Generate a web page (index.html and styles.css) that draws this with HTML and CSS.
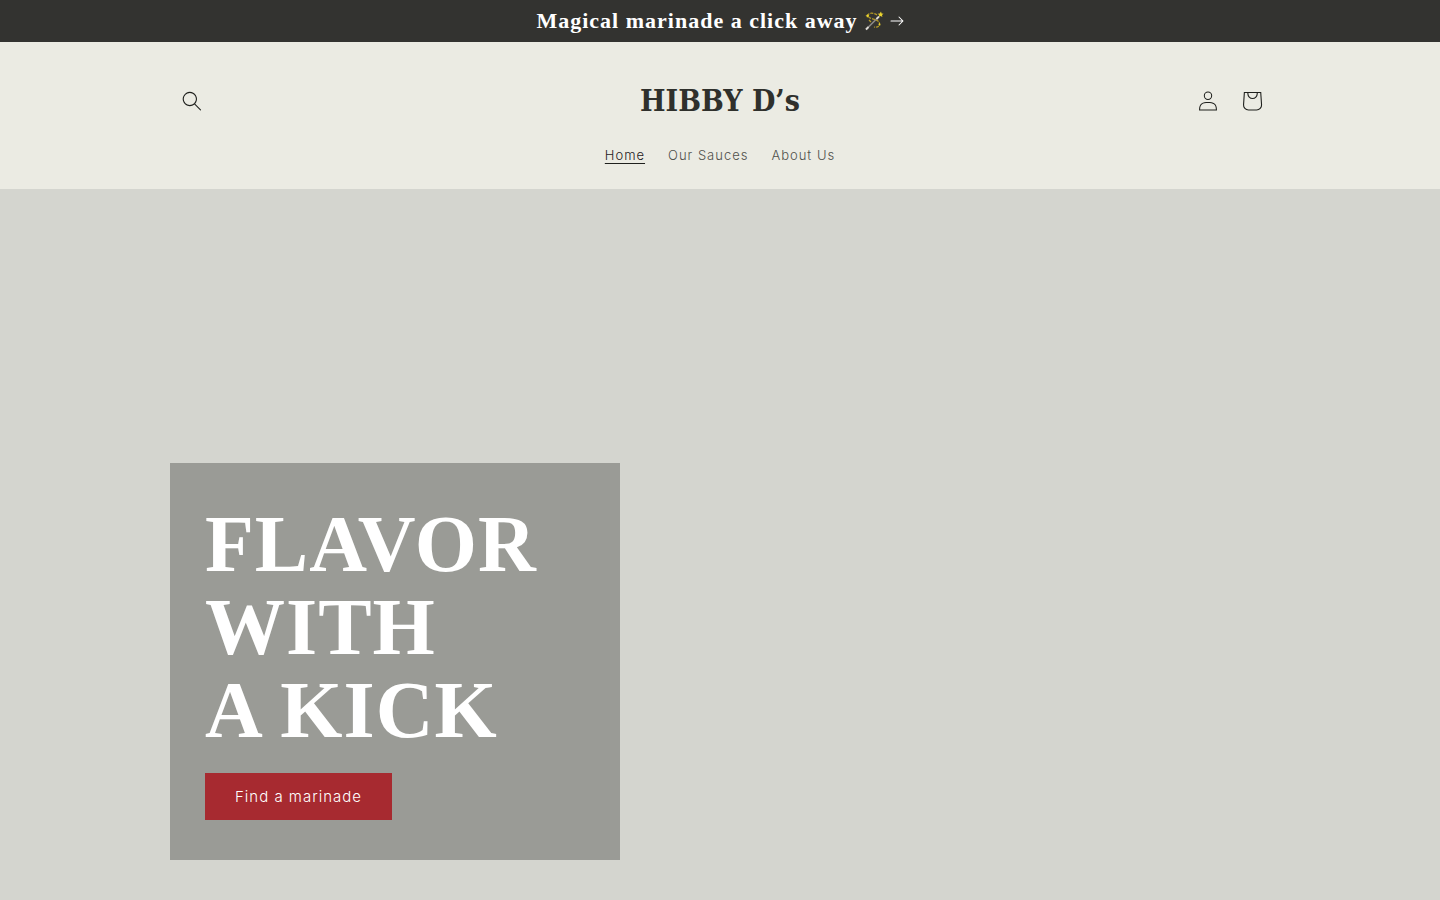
FILE: index.html
```html
<!DOCTYPE html>
<html lang="en">
<head>
<meta charset="utf-8">
<meta name="viewport" content="width=device-width, initial-scale=1">
<title>Hibby D's</title>
<link rel="stylesheet" href="styles.css">
</head>
<body>
<a class="announcement" href="#sauces">
  <span>Magical marinade a click away</span>
  <svg class="wand" viewBox="0 0 20 20" aria-hidden="true">
    <path d="M2 18.5 13.5 7" stroke="#8d8b88" stroke-width="1.6"/>
    <path d="M2 18.5 4.5 16M12.5 8l2.5-2.5" stroke="#dedbd6" stroke-width="1.8"/>
    <path d="M13 4C9 1 3 2 4 5s9 3 11 6-1 6-5 5M5 9l2 2" fill="none" stroke="#b59b26" stroke-width="1.2" stroke-dasharray="3 1"/>
    <path d="m17 .5.6 2 2 .2-1.6 1.3.4 2-1.8-1-1.8 1 .4-2-1.6-1.3 2.1-.2zM3 3l1 1 1.3-.3-.7 1.2.7 1.2L4 5.8l-1 1-.2-1.4L1.500 4.800 2.800 4.300zM15 12l1.500 1-.4 1.700-1.600-.8z" fill="#ead32e"/>
  </svg>
  <svg class="arrow" viewBox="0 0 14 10" aria-hidden="true"><path fill="currentColor" fill-rule="evenodd" d="M8.537.808a.5.5 0 0 1 .817-.162l4 4a.5.5 0 0 1 0 .708l-4 4a.5.5 0 1 1-.708-.708L11.793 5.500H1a.5.5 0 0 1 0-1h10.793L8.646 1.354a.5.5 0 0 1-.109-.546"/></svg>
</a>
<header class="header">
  <div class="header-row">
    <button class="icon-button" type="button" aria-label="Search">
      <svg class="icon" viewBox="0 0 18 19"><path fill="currentColor" fill-rule="evenodd" d="M11.03 11.68A5.784 5.784 0 1 1 2.850 3.500a5.784 5.784 0 0 1 8.180 8.180m.26 1.120a6.780 6.780 0 1 1 .72-.7l5.400 5.400a.5.5 0 1 1-.71.7z"/></svg>
    </button>
    <a class="logo" href="#home">HIBBY D’s</a>
    <div class="actions">
      <a class="icon-button" href="#account" aria-label="Log in">
        <svg class="icon" viewBox="0 0 18 19"><path fill="currentColor" fill-rule="evenodd" d="M6 4.500a3 3 0 1 1 6 0 3 3 0 0 1-6 0m3-4a4 4 0 1 0 0 8 4 4 0 0 0 0-8m5.580 12.150c1.120.82 1.830 2.240 1.910 4.850H1.510c.08-2.600.79-4.030 1.900-4.850C4.660 11.750 6.500 11.500 9 11.500s4.350.26 5.580 1.150M9 10.500c-2.500 0-4.650.24-6.170 1.350C1.270 12.980.5 14.930.5 18v.5h17V18c0-3.070-.77-5.020-2.330-6.150-1.520-1.100-3.670-1.350-6.170-1.350"/></svg>
      </a>
      <a class="icon-button" href="#cart" aria-label="Cart">
        <svg class="cart" viewBox="0 0 40 40"><path fill="currentColor" fill-rule="evenodd" d="M15.750 11.800h-3.160l-.77 11.600a5 5 0 0 0 4.990 5.340h7.380a5 5 0 0 0 4.990-5.330L28.400 11.800zm0 1h-2.220l-.71 10.670a4 4 0 0 0 3.990 4.270h7.380a4 4 0 0 0 4-4.270l-.72-10.670h-2.220v.63a4.750 4.750 0 1 1-9.500 0zm8.500 0h-7.500v.63a3.750 3.750 0 1 0 7.500 0z"/></svg>
      </a>
    </div>
  </div>
  <nav class="nav" aria-label="Main">
    <a class="nav-link current" href="#home" aria-current="page">Home</a>
    <a class="nav-link" href="#sauces">Our Sauces</a>
    <a class="nav-link" href="#about">About Us</a>
  </nav>
</header>
<main class="hero">
  <div class="hero-inner">
    <section class="card">
      <h1 class="title">FLAVOR WITH<br>A KICK</h1>
      <a class="button" href="#sauces">Find a marinade</a>
    </section>
  </div>
</main>
</body>
</html>
```
FILE: styles.css
```css
* {
  box-sizing: border-box;
}

body {
  margin: 0;
  min-height: 100vh;
  display: flex;
  flex-direction: column;
  background: #ebebe3;
  color: #2f302c;
  font-family: Inter, "Liberation Sans", sans-serif;
}

a {
  color: inherit;
  text-decoration: none;
}

.announcement {
  display: flex;
  align-items: center;
  justify-content: center;
  gap: 6px;
  min-height: 42px;
  background: #333330;
  color: #fff;
  font: bold 22px/28px "Liberation Serif", serif;
  letter-spacing: 1px;
}

.wand {
  width: 20px;
  height: 20px;
}

.arrow {
  width: 14px;
  height: 10px;
}

.header {
  padding: 32px 16px 22px;
}

.header-row {
  display: grid;
  grid-template-columns: 1fr auto 1fr;
  align-items: center;
  max-width: 1100px;
  margin: 0 auto;
}

.icon-button {
  display: flex;
  align-items: center;
  justify-content: center;
  width: 44px;
  height: 44px;
  padding: 0;
  border: 0;
  background: none;
  color: #1f201d;
  cursor: pointer;
}

.icon {
  width: 20px;
  height: 20px;
}

.cart {
  width: 44px;
  height: 44px;
}

.actions {
  display: flex;
  justify-content: flex-end;
  margin-right: -4px;
}

.logo {
  font: bold 30px/54px "DejaVu Serif Condensed", "DejaVu Serif", serif;
}

.nav {
  display: flex;
  flex-wrap: wrap;
  justify-content: center;
  gap: 23px;
  padding-top: 16px;
}

.nav-link {
  color: #50514c;
  font-size: 13px;
  font-weight: 300;
  line-height: 23px;
  letter-spacing: 1px;
}

.nav-link.current {
  color: #1f201d;
  text-decoration: underline;
  text-underline-offset: 3px;
}

.hero {
  flex: 1;
  display: flex;
  align-items: flex-end;
  padding: 40px 16px;
  background: #d4d5cf;
}

.hero-inner {
  width: 100%;
  max-width: 1100px;
  margin: 0 auto;
}

.card {
  max-width: 450px;
  padding: 40px 35px;
  background: #9a9b96;
  color: #fff;
}

.title {
  margin: 0 0 21px;
  font: bold 80px/83px "Liberation Serif", serif;
  letter-spacing: 1px;
}

.button {
  display: inline-block;
  padding: 0 30px;
  background: #a72a30;
  font-size: 15px;
  font-weight: 300;
  line-height: 47px;
  letter-spacing: 1px;
  vertical-align: top;
}
```
